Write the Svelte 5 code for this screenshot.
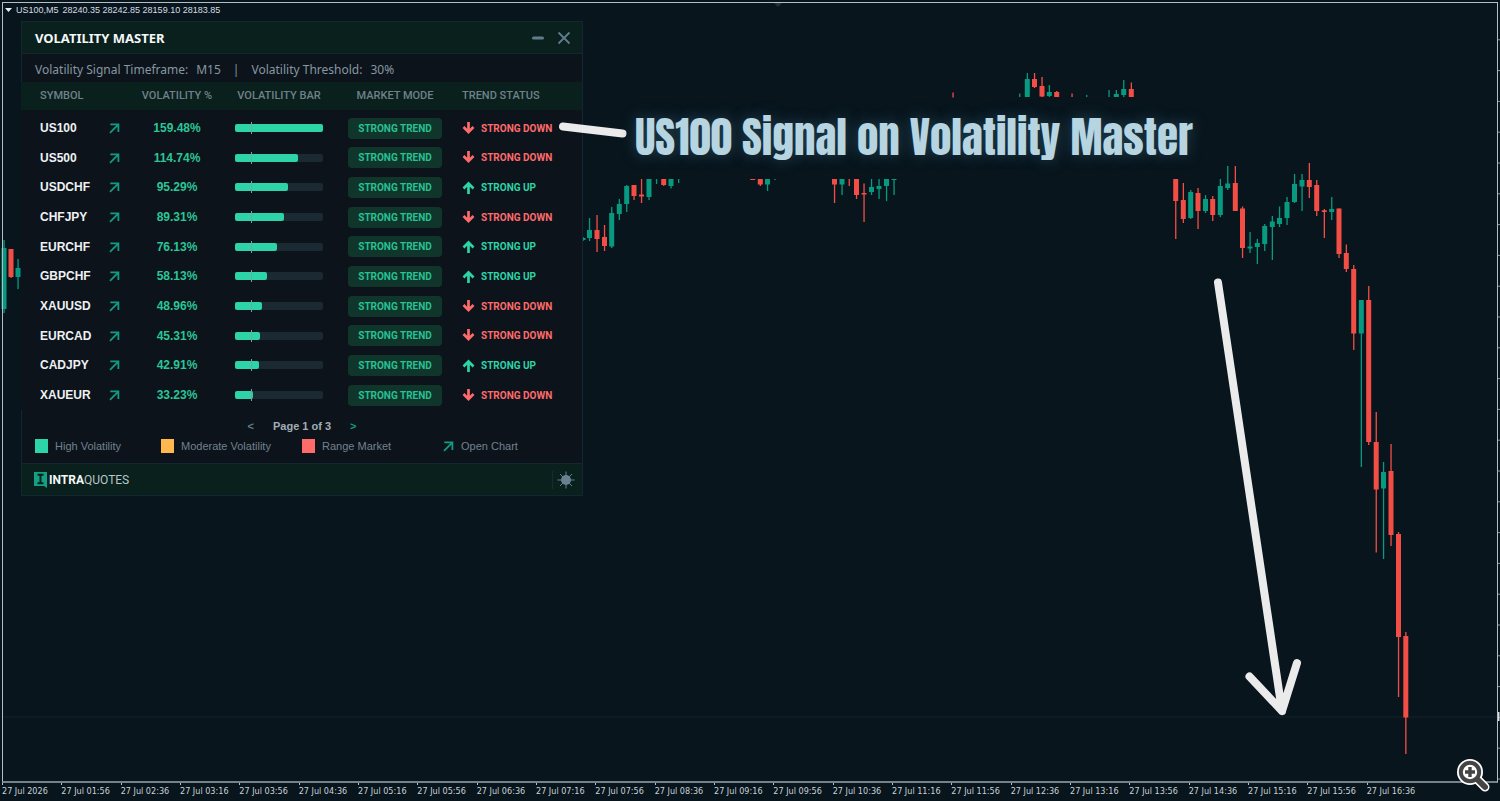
<script lang="ts">
	type Row = { symbol: string; volatility: number; up: boolean };
	type Candle = [x: number, high: number, low: number, top: number, bottom: number, up: number];

	const rows: Array<Row> = [
		{ symbol: "US100", volatility: 159.48, up: false },
		{ symbol: "US500", volatility: 114.74, up: false },
		{ symbol: "USDCHF", volatility: 95.29, up: true },
		{ symbol: "CHFJPY", volatility: 89.31, up: false },
		{ symbol: "EURCHF", volatility: 76.13, up: true },
		{ symbol: "GBPCHF", volatility: 58.13, up: true },
		{ symbol: "XAUUSD", volatility: 48.96, up: false },
		{ symbol: "EURCAD", volatility: 45.31, up: false },
		{ symbol: "CADJPY", volatility: 42.91, up: true },
		{ symbol: "XAUEUR", volatility: 33.23, up: false },
	];

	// bars are drawn relative to the most volatile symbol
	const maxVolatility = Math.max(...rows.map((r) => r.volatility));

	const pad = (n: number) => String(n).padStart(2, "0");

	// one label every 40 minutes, starting at 01:56
	const times: Array<string> = ["27 Jul 2026"];
	for (let i = 0; i < 23; i++) {
		const minutes = 116 + i * 40;
		times.push(`27 Jul ${pad(Math.floor(minutes / 60))}:${pad(minutes % 60)}`);
	}

	const priceTicks = Array.from({ length: 25 }, (_, i) => 779 - i * 30.8);

	const candles: Array<Candle> = [
		[4, 240, 313, 248, 309, 1],
		[11, 249, 278, 249, 277, 0],
		[18, 259, 289, 268, 277, 1],
		[583, 237, 241, 238, 240, 1],
		[589.5, 218, 241, 230, 238, 1],
		[597, 215, 252, 230, 239, 0],
		[604.5, 225, 251, 237, 246, 0],
		[611.7, 207, 248, 213, 246.5, 1],
		[619.3, 199, 220, 204, 214, 1],
		[626.7, 185, 212, 186, 204, 1],
		[634, 185, 200, 185, 196, 0],
		[641.5, 179, 203, 194.5, 196.5, 0],
		[649, 179, 200, 179, 197, 1],
		[656.5, 179, 184, 179, 179, 1],
		[663.7, 179, 186, 179, 185, 0],
		[671, 179, 188.5, 179, 186, 1],
		[678.6, 179, 183, 179, 179, 1],
		[752.7, 179, 180, 179, 180, 0],
		[760.3, 179, 186, 179, 184.5, 0],
		[767.5, 179, 191, 179, 184.5, 1],
		[775, 179, 180, 179, 179, 1],
		[834.5, 179, 203, 179, 184.5, 0],
		[842, 179, 195, 179, 184.5, 1],
		[849.2, 179, 186, 179, 179, 0],
		[856.5, 179, 199, 179, 195, 0],
		[864, 183.5, 222, 193, 194.5, 0],
		[871.5, 179, 195, 187, 192, 1],
		[879, 179, 199, 186, 189, 1],
		[886.5, 179, 201, 179, 186, 1],
		[894, 179, 195, 179, 180, 1],
		[953, 92.5, 97.5, 97, 97, 0],
		[1019.7, 93.5, 97, 97, 97, 1],
		[1027.3, 73, 97, 79, 97, 1],
		[1034.5, 73, 88, 79, 87, 0],
		[1042, 77, 97, 86, 96.5, 0],
		[1049.3, 85, 97, 92, 96, 1],
		[1056.7, 91, 97, 92, 97, 0],
		[1072, 93.5, 97, 97, 97, 0],
		[1086.7, 95, 97, 97, 97, 1],
		[1109, 90, 97, 97, 97, 1],
		[1116.3, 90, 97, 94, 97, 1],
		[1123.7, 80, 97, 89, 95, 1],
		[1131.3, 82.5, 97, 89, 97, 0],
		[1175.7, 179, 239, 179, 201, 0],
		[1183.3, 183, 223, 200, 219, 0],
		[1190.7, 190, 219, 192, 218, 1],
		[1198, 188, 229, 193, 211, 0],
		[1205.5, 195, 213, 199, 211, 1],
		[1212.7, 196, 221, 199, 215, 0],
		[1220.3, 179, 217, 186, 215, 1],
		[1227.7, 166, 190, 183.5, 188, 1],
		[1235.3, 166, 211, 183, 211, 0],
		[1242.5, 206.5, 258, 208.5, 248, 0],
		[1250, 232, 253, 246.5, 248.5, 1],
		[1257.3, 239, 264, 243, 247, 1],
		[1264.7, 224, 251, 226, 244, 1],
		[1272.3, 216, 260, 221.5, 227, 1],
		[1279.5, 206.5, 227, 218, 224, 1],
		[1287, 197, 225, 202, 218, 1],
		[1294.5, 174, 203, 184, 202, 1],
		[1302, 174, 211, 180, 186.5, 1],
		[1309.3, 163, 198, 180, 187, 0],
		[1316.7, 180, 216, 185, 211, 0],
		[1324.3, 209, 238, 210.3, 212, 0],
		[1331.7, 197, 220, 209, 212, 1],
		[1339, 208.5, 258, 208.5, 254, 0],
		[1346.3, 244.5, 272, 253, 269, 0],
		[1353.7, 265, 350, 269, 333.5, 0],
		[1361.3, 300, 467, 300, 333.5, 1],
		[1368.7, 286, 445, 300, 442, 0],
		[1376.2, 412, 552.5, 442, 489.5, 0],
		[1383.5, 462, 559, 472, 488.5, 1],
		[1391, 444, 546, 471, 535, 0],
		[1398.5, 532, 697, 534, 637, 0],
		[1405.8, 632, 754, 636, 717.5, 0],
	];
</script>

{#snippet openIcon()}
	<svg class="open-icon" width="11" height="11" viewBox="0 0 11 11" aria-hidden="true">
		<path d="M1.3 1.4h8.1v7.6M9.2 1.6 1 9.8" fill="none" stroke="currentColor" stroke-width="1.8" />
	</svg>
{/snippet}

<div class="terminal">
	<svg class="plot" viewBox="0 0 1500 801" preserveAspectRatio="none" aria-hidden="true">
		<path d="M3 717H1500" stroke="#16222a" />
		{#each candles as [x, high, low, top, bottom, up]}
			<g class:up={up === 1} class="candle">
				<rect x={x - 0.6} y={high} width="1.3" height={low - high} />
				<rect x={x - 2.5} y={top} width="5" height={bottom - top} />
			</g>
		{/each}
		{#each priceTicks as y}
			<path d="M1497 {y}h3" stroke="#8b979f" />
		{/each}
		<path d="M1498.5 712v9" stroke="#d7dde0" stroke-width="2" />
		<path d="M774 3h8l-4 4z" fill="#25323a" />
	</svg>

	<main class="chart">
		<div class="quote">
			<svg width="7" height="4" viewBox="0 0 7 4" aria-hidden="true"><path d="M0 0h7L3.5 4z" fill="#e8edf0" /></svg>
			<span>US100,M5</span>
			<span>28240.35 28242.85 28159.10 28183.85</span>
		</div>

		<section class="panel">
			<header>
				<h1>VOLATILITY MASTER</h1>
				<button aria-label="Minimize">
					<svg width="14" height="14" viewBox="0 0 14 14"><path d="M2.5 7h9" stroke="currentColor" stroke-width="3" stroke-linecap="round" /></svg>
				</button>
				<button aria-label="Close">
					<svg width="14" height="14" viewBox="0 0 14 14"><path d="M1.5 1.5l11 11M12.5 1.5l-11 11" stroke="currentColor" stroke-width="1.8" /></svg>
				</button>
			</header>

			<div class="settings">
				<span>Volatility Signal Timeframe:</span>
				<span>M15</span>
				<span class="divider">|</span>
				<span>Volatility Threshold:</span>
				<span>30%</span>
			</div>

			<table>
				<colgroup>
					<col class="c-symbol" /><col class="c-open" /><col class="c-vol" />
					<col class="c-bar" /><col class="c-mode" /><col class="c-trend" />
				</colgroup>
				<thead>
					<tr>
						<th class="symbol" colspan="2">SYMBOL</th>
						<th>VOLATILITY %</th>
						<th>VOLATILITY BAR</th>
						<th>MARKET MODE</th>
						<th class="trend">TREND STATUS</th>
					</tr>
				</thead>
				<tbody>
					{#each rows as row}
						<tr>
							<td class="symbol">{row.symbol}</td>
							<td><button aria-label="Open {row.symbol} chart">{@render openIcon()}</button></td>
							<td class="volatility">{row.volatility.toFixed(2)}%</td>
							<td>
								<div class="bar">
									<div class="fill" style="width: {(row.volatility / maxVolatility) * 100}%"></div>
								</div>
							</td>
							<td><span class="mode">STRONG TREND</span></td>
							<td class="trend">
								<div class="status" class:up={row.up}>
									<svg width="13" height="13" viewBox="0 0 13 13" aria-hidden="true">
										<path d={row.up ? "M6.5 13V2M1.5 7.5l5-5 5 5" : "M6.5 0v10M1.5 5l5 5 5-5"} fill="none" stroke="currentColor" stroke-width="2.7" />
									</svg>
									<span>{row.up ? "STRONG UP" : "STRONG DOWN"}</span>
								</div>
							</td>
						</tr>
					{/each}
				</tbody>
			</table>

			<nav>
				<button aria-label="Previous page">&lt;</button>
				<span>Page 1 of 3</span>
				<button class="next" aria-label="Next page">&gt;</button>
			</nav>

			<ul class="legend">
				<li><i class="high"></i>High Volatility</li>
				<li><i class="moderate"></i>Moderate Volatility</li>
				<li><i class="range"></i>Range Market</li>
				<li>{@render openIcon()}Open Chart</li>
			</ul>

			<footer>
				<svg width="13" height="16" viewBox="0 0 13 16" aria-hidden="true">
					<path d="M0 0h13v16l-3-2H0z" fill="#14a085" />
					<path d="M3.5 2.8h6M3.5 11.2h6M6.5 3v8" stroke="#09201d" stroke-width="2" />
				</svg>
				<span class="brand"><b>INTRA</b>QUOTES</span>
				<button class="theme" aria-label="Toggle theme">
					<svg width="18" height="18" viewBox="0 0 18 18">
						<circle cx="9" cy="9" r="5" fill="currentColor" />
						<path d="M9 0.5v17M0.5 9h17M3 3l12 12M15 3 3 15" stroke="currentColor" />
					</svg>
				</button>
			</footer>
		</section>
	</main>

	<div class="axis">
		{#each times as time}
			<span>{time}</span>
		{/each}
	</div>

	<svg class="plot marks" viewBox="0 0 1500 801" preserveAspectRatio="none" aria-hidden="true">
		<path d="M563 126.5 622.5 133.5" />
		<path d="M1218 282.5 1282 711M1249.5 676.5 1282 711 1297 663" />
	</svg>

	<h2 class="caption">US100 Signal on Volatility Master</h2>

	<button class="zoom" aria-label="Zoom in">
		<svg width="34" height="34" viewBox="0 0 34 34">
			<path d="M21 21l8 8" stroke="#fff" stroke-width="9" stroke-linecap="round" />
			<circle cx="14" cy="14" r="13" fill="#fff" />
			<path d="M20 20l9 9" stroke="#444" stroke-width="6" stroke-linecap="round" />
			<circle cx="14" cy="14" r="9.2" fill="#fff" stroke="#444" stroke-width="4" />
			<path d="M14 9v10M9 14h10" stroke="#444" stroke-width="3.4" />
		</svg>
	</button>
</div>

<style>
	:global(body) {
		background: #08151d;
	}

	.terminal {
		position: relative;
		display: flex;
		flex-direction: column;
		box-sizing: border-box;
		min-height: 100vh;
		padding: 2px 2px 0;
		background: #08151d;
		font-family: "Liberation Sans", Arial, sans-serif;
	}

	button {
		display: inline-flex;
		padding: 0;
		border: 0;
		background: none;
		color: inherit;
		font: inherit;
		cursor: pointer;
	}

	svg {
		display: block;
	}

	.plot {
		position: absolute;
		inset: 0;
		width: 100%;
		height: 100%;
		pointer-events: none;
	}

	.candle {
		fill: #f24e46;
	}

	.candle.up {
		fill: #089981;
	}

	.marks path {
		fill: none;
		stroke: #ebebeb;
		stroke-width: 8;
		stroke-linecap: round;
		stroke-linejoin: round;
	}

	.chart {
		position: relative;
		flex: 1;
		border: 1px solid #b4bec5;
		border-bottom: 2px solid #75828a;
	}

	.quote {
		display: flex;
		align-items: center;
		gap: 4px;
		padding-left: 2px;
		height: 14px;
		color: #d5dde2;
		font: 9px/14px "Liberation Sans", Arial, sans-serif;
	}

	.panel {
		box-sizing: border-box;
		width: 562px;
		max-width: calc(100% - 36px);
		margin: 4px 18px;
		border: 1px solid #142632;
		background: #0c131b;
		color: #72828d;
	}

	header {
		display: flex;
		align-items: center;
		gap: 12px;
		height: 31px;
		padding: 0 11px 0 13px;
		border-bottom: 1px solid #142632;
		background: #09201d;
		color: #5f7c8c;
	}

	h1 {
		flex: 1;
		margin: 0;
		color: #f4f7f8;
		font: bold 13px "Noto Sans", sans-serif;
	}

	.settings {
		display: flex;
		gap: 8px;
		padding: 3px 13px 0;
		color: #8797a0;
		font: 12px/25px "Noto Sans", sans-serif;
	}

	.divider {
		padding: 0 4px;
	}

	table {
		width: calc(100% + 1px);
		margin-left: -1px;
		border-collapse: collapse;
		table-layout: fixed;
		background: #0c131b;
	}

	.c-symbol { width: 79px; }
	.c-open { width: 28px; }
	.c-vol { width: 98px; }
	.c-bar { width: 106px; }
	.c-mode { width: 126px; }

	th, td {
		padding: 0;
		text-align: center;
	}

	th {
		height: 26px;
		padding-bottom: 2px;
		background: #09201d;
		color: #71818a;
		font: 500 11px Roboto, sans-serif;
	}

	tbody::before {
		content: "";
		display: block;
		height: 3px;
	}

	td {
		height: 30px;
	}

	tr:nth-child(3n + 2) td {
		height: 29px;
	}

	td button {
		vertical-align: middle;
	}

	.symbol {
		padding-left: 19px;
		text-align: left;
	}

	td.symbol {
		color: #eef1f3;
		font-size: 12px;
		font-weight: bold;
	}

	.open-icon {
		color: #129a82;
	}

	.volatility {
		color: #2bc596;
		font-size: 12px;
		font-weight: bold;
	}

	.bar {
		position: relative;
		width: 88px;
		height: 8px;
		margin: 0 auto;
		border-radius: 2px;
		background: #1b2933;
	}

	.fill {
		height: 100%;
		border-radius: 2px;
		background: #2dd4a7;
	}

	/* threshold marker */
	.bar::after {
		content: "";
		position: absolute;
		top: -2px;
		bottom: -2px;
		left: 18%;
		width: 1px;
		background: #6fa79d;
	}

	.mode {
		display: inline-block;
		width: 94px;
		border-radius: 4px;
		background: #10352b;
		color: #27c193;
		font: bold 10px/21px Roboto, sans-serif;
		vertical-align: middle;
	}

	.trend {
		padding-left: 4px;
		text-align: left;
	}

	.status {
		display: flex;
		align-items: center;
		gap: 6px;
		color: #ff6b6b;
		font: bold 10px Roboto, sans-serif;
	}

	.status.up {
		color: #2dd4a7;
	}

	nav {
		display: flex;
		justify-content: center;
		align-items: center;
		gap: 19px;
		padding-top: 8px;
		color: #a3adb4;
		font-size: 11px;
		font-weight: bold;
		line-height: 16px;
	}

	nav button {
		color: #5f7c8c;
	}

	nav .next {
		color: #129a82;
	}

	.legend {
		display: flex;
		margin: 0;
		padding: 5px 13px 10px;
		list-style: none;
		font-size: 11px;
		line-height: 14px;
	}

	.legend li {
		display: flex;
		align-items: center;
		gap: 7px;
		width: 126px;
	}

	.legend li:nth-child(2), .legend li:nth-child(3) {
		width: 141px;
	}

	.legend i {
		width: 13px;
		height: 14px;
	}

	.high { background: #2dd4a7; }
	.moderate { background: #ffb84d; }
	.range { background: #ff6b6b; }

	footer {
		display: flex;
		align-items: center;
		gap: 2px;
		height: 31px;
		padding: 0 7px 0 12px;
		border-top: 1px solid #142632;
		background: #09201d;
	}

	.brand {
		flex: 1;
		color: #b9c7c8;
		font: 12px Roboto, sans-serif;
	}

	.brand b {
		color: #f4f7f8;
	}

	.theme {
		padding-left: 4px;
		border-left: 1px solid #142a36;
		color: #668190;
	}

	.axis {
		display: grid;
		grid-template-columns: repeat(24, 1fr);
		height: 18px;
		padding-right: 72px;
		color: #c9d1d6;
		font: 9px/12px "DejaVu Sans Condensed", "DejaVu Sans", sans-serif;
		white-space: nowrap;
	}

	.axis span::before {
		content: "";
		display: block;
		width: 1px;
		height: 2px;
		background: #b4bec5;
	}

	.caption {
		position: absolute;
		top: 108px;
		left: 635px;
		margin: 0;
		color: #b7d4e1;
		font: 400 43px/58px Anton, Roboto, sans-serif;
		text-shadow: 0 0 14px #244656;
		white-space: nowrap;
	}

	.zoom {
		position: absolute;
		right: 10px;
		bottom: 9px;
	}
</style>
